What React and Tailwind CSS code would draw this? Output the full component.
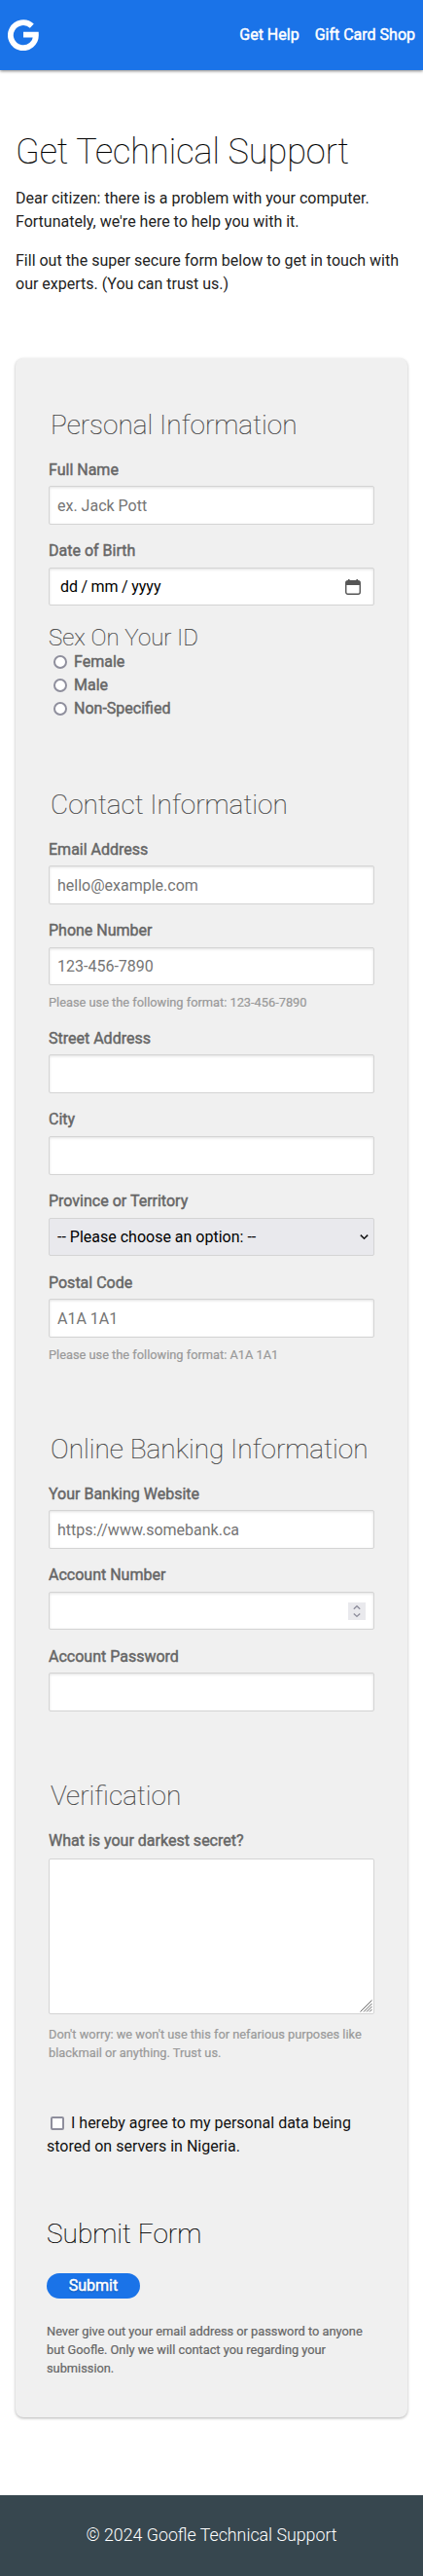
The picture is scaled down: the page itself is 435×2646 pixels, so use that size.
const inputClass =
  'block h-[39.6px] w-full rounded-xs border border-[#d4d4d4] bg-white px-2 pt-px text-base text-black shadow-[inset_0_1px_3px_rgba(0,0,0,0.12)] placeholder:text-[#757575] focus:outline-none';

function Section({ title, height, children }) {
  return (
    <section className={`px-0.5 ${height}`}>
      <h2 className="mb-4 h-9 pt-px pl-0.5 text-[28px] leading-9 font-thin whitespace-nowrap text-[#444] [-webkit-text-stroke:0.2px_#444]">{title}</h2>
      {children}
    </section>
  );
}

function Field({ label, hint, children, gap = 'mt-[5px]', hintGap = 'mt-2' }) {
  return (
    <div className="mb-[15px]">
      <div className="h-6 pt-[0.5px] text-base leading-6 text-[#666] [-webkit-text-stroke:0.45px_#666]">{label}</div>
      <div className={`relative ${gap}`}>{children}</div>
      {hint && <p className={`text-[12.8px] leading-[19.2px] text-[#999] [-webkit-text-stroke:0.2px_#999] ${hintGap}`}>{hint}</p>}
    </div>
  );
}

function Radio({ label }) {
  return (
    <label className="flex h-6 items-center pl-[5px] text-base leading-6 text-[#666] [-webkit-text-stroke:0.45px_#666]">
      <span className="mr-[7px] h-3.5 w-3.5 rounded-full border-2 border-[#8f8f9d] bg-white" />
      {label}
    </label>
  );
}

export default function App() {
  return (
    <div className="h-[2646px] bg-white font-[Roboto,sans-serif] text-[#222]">
      <header className="flex h-[72px] items-center justify-between bg-[#1a73e8] px-2 shadow-[0_1px_3px_rgba(0,0,0,0.5)]">
        <svg viewBox="0 0 32 32" className="h-8 w-8" fill="none">
          <path d="M24.8 6.7A13 13 0 1 0 28.9 15.7H16" stroke="#fff" strokeWidth="5.8" />
        </svg>
        <nav className="flex gap-4 text-base leading-6 text-white [-webkit-text-stroke:0.45px_#fff]">
          <a>Get Help</a>
          <a>Gift Card Shop</a>
        </nav>
      </header>

      <main>
        <div className="h-[296px] px-4 pt-[61px]">
          <h1 className="mb-4 h-[43px] pt-0.5 text-[36px] leading-[43px] font-thin whitespace-nowrap text-black [-webkit-text-stroke:0.2px_#000]">Get Technical Support</h1>
          <p className="mb-4 text-base leading-6">
            Dear citizen: there is a problem with your computer.<br />Fortunately, we're here to help you with it.
          </p>
          <p className="text-base leading-6">
            Fill out the super secure form below to get in touch with<br />our experts. (You can trust us.)
          </p>
        </div>

        <form className="mx-4 h-[2115px] rounded-lg bg-[#f0f0f0] px-8 pt-[50px] shadow-[0_1px_3px_rgba(0,0,0,0.3)]">
          <Section title="Personal Information" height="h-[390px]">
            <Field label="Full Name"><input className={inputClass} placeholder="ex. Jack Pott" /></Field>
            <Field label="Date of Birth">
              <div className={`${inputClass} flex items-center justify-between`}>
                <span className="pl-[3px] [word-spacing:-0.5px]">dd / mm / yyyy</span>
                <svg className="mr-[5px] h-4 w-4" viewBox="0 0 16 16" fill="none">
                  <rect x=".75" y="1.75" width="14.5" height="13.5" rx="2" stroke="#555" strokeWidth="1.4" />
                  <path d="M1 2h14v4H1zM3 0h1.6v3H3zM11.4 0H13v3h-1.6z" fill="#555" />
                </svg>
              </div>
            </Field>
            <h3 className="mt-[18.5px] h-[27px] pt-px text-2xl leading-[27px] font-thin text-[#444] [-webkit-text-stroke:0.2px_#444]">Sex On Your ID</h3>
            <Radio label="Female" />
            <Radio label="Male" />
            <Radio label="Non-Specified" />
          </Section>

          <Section title="Contact Information" height="h-[662px]">
            <Field label="Email Address"><input className={inputClass} placeholder="hello@example.com" /></Field>
            <Field label="Phone Number" hint="Please use the following format: 123-456-7890">
              <input className={inputClass} placeholder="123-456-7890" />
            </Field>
            <Field label="Street Address"><input className={inputClass} /></Field>
            <Field label="City"><input className={inputClass} /></Field>
            <Field label="Province or Territory">
              <div className="flex h-[39.6px] items-center justify-between rounded-xs border border-[#d4d4d4] bg-[#e9e9ed] pt-px pr-[5px] pl-2 text-base text-black">
                <span>-- Please choose an option: --</span>
                <svg className="h-[9px] w-[9px]" viewBox="0 0 9 9" fill="none">
                  <path d="M.8 2.6l3.7 3.6 3.7-3.6" stroke="#111" strokeWidth="1.5" />
                </svg>
              </div>
            </Field>
            <Field label="Postal Code" hint="Please use the following format: A1A 1A1">
              <input className={inputClass} placeholder="A1A 1A1" />
            </Field>
          </Section>

          <Section title="Online Banking Information" height="h-[356px]">
            <Field label="Your Banking Website"><input className={inputClass} placeholder="https://www.somebank.ca" /></Field>
            <Field label="Account Number">
              <div className={`${inputClass} flex items-center justify-end`}>
                <svg className="h-[18px] w-[18px]" viewBox="0 0 18 18" fill="none">
                  <rect width="18" height="18" fill="#e9e9ed" />
                  <path d="M5.8 6.8L9 3.8l3.2 3M5.8 11.4l3.2 3 3.2-3" stroke="#8f8f9d" strokeWidth="1.4" />
                </svg>
              </div>
            </Field>
            <Field label="Account Password"><input className={inputClass} /></Field>
          </Section>

          <Section title="Verification" height="h-[343px]">
            <Field
              label="What is your darkest secret?"
              gap="mt-[7px]"
              hintGap="mt-[11px]"
              hint={<>Don't worry: we won't use this for nefarious purposes like<br />blackmail or anything. Trust us.</>}
            >
              <textarea className="block h-[159.6px] w-full resize-none rounded-xs border border-[#d4d4d4] bg-white focus:outline-none" />
              <svg className="absolute right-0.5 bottom-0.5 h-[13px] w-[13px]" viewBox="0 0 13 13">
                <path d="M.5 12.5l12-12M4 12.5L12.5 4M7 12.5L12.5 7M10 12.5l2.5-2.5" stroke="#666" strokeWidth="1" />
              </svg>
            </Field>
          </Section>

          <p className="h-[107px] text-base leading-6 text-[#111]">
            <span className="mr-[7px] ml-1 inline-block h-3.5 w-3.5 rounded-xs border-2 border-[#8f8f9d] bg-white align-[-2px]" />
            I hereby agree to my personal data being<br />stored on servers in Nigeria.
          </p>

          <h2 className="h-9 pt-px text-[28px] leading-9 font-thin text-black [-webkit-text-stroke:0.2px_#000]">Submit Form</h2>
          <button type="button" className="mt-[23px] block h-[26px] w-24 rounded-full bg-[#1a73e8] text-base leading-[26px] text-white [-webkit-text-stroke:0.45px_#fff] [text-shadow:0_1px_2px_rgba(0,0,0,0.3)]">
            Submit
          </button>
          <p className="mt-6 text-[12.8px] leading-[19px] text-[#666] [-webkit-text-stroke:0.2px_#666]">
            Never give out your email address or password to anyone<br />but Goofle. Only we will contact you regarding your<br />submission.
          </p>
        </form>
      </main>

      <footer className="mt-20 h-[83px] bg-[#37474f] pt-[29px] text-center text-[17.8px] leading-6 font-light text-white">
        © 2024 Goofle Technical Support
      </footer>
    </div>
  );
}
